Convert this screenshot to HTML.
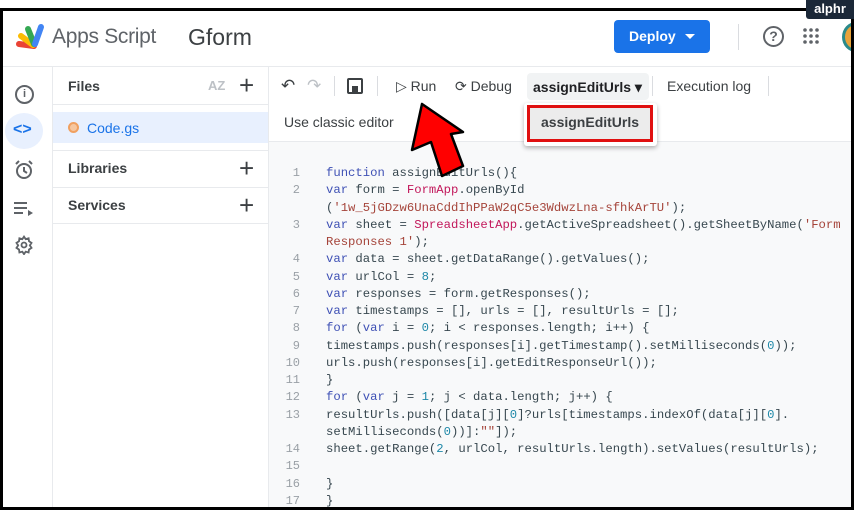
<!DOCTYPE html>
<html><head><meta charset="utf-8"><style>
*{margin:0;padding:0;box-sizing:border-box}
body{width:854px;height:510px;background:#fff;position:relative;overflow:hidden;font-family:"Liberation Sans",sans-serif;color:#3c4043}
.a{position:absolute}
.frame{left:0;top:8px;width:854px;height:502px;border:3px solid #000}
.t{font-size:14px;color:#3c4043;white-space:nowrap}
.code{font-family:"Liberation Mono",monospace;font-size:12.25px;color:#37474f;white-space:pre}
.ln{font-family:"Liberation Mono",monospace;font-size:12px;color:#9aa0a6;width:30px;text-align:right}
.k{color:#3f51b5}.c{color:#c2185b}.s{color:#a5443a}.n{color:#1e88a8}
.hl{height:1px;background:#e8eaed}
</style></head><body>
<svg class="a" style="left:14px;top:22px" width="34" height="28" viewBox="0 0 34 28">
<g stroke-linecap="round" stroke-width="6" fill="none">
<line x1="5" y1="22" x2="20" y2="24" stroke="#ea4335"/>
<line x1="7" y1="14" x2="19" y2="23" stroke="#fbbc04"/>
<line x1="14" y1="7" x2="20" y2="22" stroke="#34a853"/>
<line x1="27" y1="5" x2="21" y2="22" stroke="#4285f4"/>
</g></svg>
<div class="a" style="left:52px;top:25px;font-size:21px;color:#5f6368;letter-spacing:-0.3px">Apps Script</div>
<div class="a" style="left:188px;top:24px;font-size:23px;color:#3c4043">Gform</div>
<div class="a" style="left:614px;top:20px;width:96px;height:33px;background:#1a73e8;border-radius:4px;color:#fff;font-size:14px;font-weight:bold;line-height:33px;padding-left:15px">Deploy<span style="position:absolute;left:71px;top:14px;border-left:5px solid transparent;border-right:5px solid transparent;border-top:5px solid #fff"></span></div>
<div class="a" style="left:738px;top:24px;width:1px;height:26px;background:#dadce0"></div>
<div class="a" style="left:763px;top:26px;width:21px;height:21px;border:2px solid #5f6368;border-radius:50%;font-size:14px;font-weight:bold;text-align:center;line-height:17px;color:#5f6368">?</div>
<svg class="a" style="left:803px;top:28px" width="16" height="16"><g fill="#5f6368"><circle cx="2" cy="2" r="1.8"/><circle cx="8" cy="2" r="1.8"/><circle cx="14" cy="2" r="1.8"/><circle cx="2" cy="8" r="1.8"/><circle cx="8" cy="8" r="1.8"/><circle cx="14" cy="8" r="1.8"/><circle cx="2" cy="14" r="1.8"/><circle cx="8" cy="14" r="1.8"/><circle cx="14" cy="14" r="1.8"/></g></svg>
<div class="a" style="left:842px;top:22px;width:28px;height:30px;border-radius:50%;background:#e8a33a;border:3px solid #2a8a8a"></div>
<div class="a hl" style="left:0;top:66px;width:854px"></div>
<div class="a" style="left:15px;top:85px;width:19px;height:19px;border:2px solid #5f6368;border-radius:50%;font-size:11px;font-weight:bold;text-align:center;line-height:15px;color:#5f6368">i</div>
<div class="a" style="left:5px;top:113px;width:38px;height:36px;border-radius:50%;background:#e8f0fe"></div>
<div class="a" style="left:13px;top:121px;font-size:16px;font-weight:bold;color:#1a73e8">&lt;&gt;</div>
<svg class="a" style="left:14px;top:160px" width="20" height="20" viewBox="0 0 20 20" fill="none" stroke="#5f6368" stroke-width="2"><circle cx="10" cy="11" r="7"/><path d="M10 7v4l3 2M2 4l3-3M18 4l-3-3"/></svg>
<svg class="a" style="left:14px;top:200px" width="20" height="16" fill="#5f6368"><rect x="0" y="2" width="13" height="2"/><rect x="0" y="7" width="13" height="2"/><rect x="0" y="12" width="9" height="2"/><path d="M14 10l5 3-5 3z"/></svg>
<svg class="a" style="left:14px;top:235px" width="20" height="20" viewBox="0 0 24 24" fill="none" stroke="#5f6368" stroke-width="2.2"><circle cx="12" cy="12" r="3"/><path d="M12 2l2 3 3.5-1 .5 3.5 3 2-2 3 2 3-3 2-.5 3.5-3.5-1-2 3-2-3-3.5 1-.5-3.5-3-2 2-3-2-3 3-2 .5-3.5 3.5 1z"/></svg>
<div class="a" style="left:52px;top:66px;width:1px;height:444px;background:#e8eaed"></div>
<div class="a t" style="left:68px;top:78px;font-weight:bold">Files</div>
<div class="a" style="left:208px;top:78px;font-size:13px;color:#bdc1c6;font-weight:bold">AZ</div>
<div class="a" style="left:239px;top:70px;font-size:26px;color:#3c4043;font-weight:300">+</div>
<div class="a hl" style="left:53px;top:104px;width:215px"></div>
<div class="a" style="left:53px;top:112px;width:215px;height:31px;background:#e8f0fe"></div>
<div class="a" style="left:68px;top:122px;width:11px;height:11px;border:2px solid #f0a060;border-radius:50%;background:#f6c7a0"></div>
<div class="a t" style="left:87px;top:120px;color:#1a73e8">Code.gs</div>
<div class="a hl" style="left:53px;top:150px;width:215px"></div>
<div class="a t" style="left:68px;top:160px;font-weight:bold">Libraries</div>
<div class="a" style="left:239px;top:153px;font-size:26px;color:#3c4043">+</div>
<div class="a hl" style="left:53px;top:187px;width:215px"></div>
<div class="a t" style="left:68px;top:197px;font-weight:bold">Services</div>
<div class="a" style="left:239px;top:190px;font-size:26px;color:#3c4043">+</div>
<div class="a hl" style="left:53px;top:223px;width:215px"></div>
<div class="a" style="left:268px;top:66px;width:1px;height:444px;background:#e8eaed"></div>
<div class="a" style="left:281px;top:76px;font-size:17px;color:#3c4043">&#x21B6;</div>
<div class="a" style="left:307px;top:76px;font-size:17px;color:#bdc1c6">&#x21B7;</div>
<div class="a" style="left:334px;top:76px;width:1px;height:20px;background:#dadce0"></div>
<div class="a" style="left:347px;top:78px;width:16px;height:16px;border:2px solid #3c4043;border-radius:2px"><div style="position:absolute;left:3px;top:6px;width:6px;height:6px;background:#3c4043"></div></div>
<div class="a" style="left:377px;top:76px;width:1px;height:20px;background:#dadce0"></div>
<div class="a t" style="left:396px;top:78px">&#x25B7; Run</div>
<div class="a t" style="left:455px;top:78px">&#x27F3; Debug</div>
<div class="a" style="left:527px;top:73px;width:122px;height:27px;background:#f1f3f4;border-radius:4px"></div>
<div class="a t" style="left:533px;top:79px;font-weight:bold;color:#202124">assignEditUrls &#x25BE;</div>
<div class="a" style="left:652px;top:76px;width:1px;height:20px;background:#dadce0"></div>
<div class="a t" style="left:667px;top:78px">Execution log</div>
<div class="a" style="left:768px;top:76px;width:1px;height:20px;background:#dadce0"></div>
<div class="a t" style="left:284px;top:114px">Use classic editor</div>
<div class="a hl" style="left:269px;top:141px;width:585px"></div>
<div class="a" style="left:269px;top:142px;width:585px;height:368px;background:#f8f9fa"></div>
<div class="a" style="left:270px;top:165px;line-height:17.25px">
<div style="display:flex"><div class="ln">1<br>2<br><br>3<br><br>4<br>5<br>6<br>7<br>8<br>9<br>10<br>11<br>12<br>13<br><br>14<br>15<br>16<br>17</div>
<div class="code" style="margin-left:26px"><span class="k">function</span> assignEditUrls(){
<span class="k">var</span> form = <span class="c">FormApp</span>.openById
(<span class="s">'1w_5jGDzw6UnaCddIhPPaW2qC5e3WdwzLna-sfhkArTU'</span>);
<span class="k">var</span> sheet = <span class="c">SpreadsheetApp</span>.getActiveSpreadsheet().getSheetByName(<span class="s">'Form</span>
<span class="s">Responses 1'</span>);
<span class="k">var</span> data = sheet.getDataRange().getValues();
<span class="k">var</span> urlCol = <span class="n">8</span>;
<span class="k">var</span> responses = form.getResponses();
<span class="k">var</span> timestamps = [], urls = [], resultUrls = [];
<span class="k">for</span> (<span class="k">var</span> i = <span class="n">0</span>; i &lt; responses.length; i++) {
timestamps.push(responses[i].getTimestamp().setMilliseconds(<span class="n">0</span>));
urls.push(responses[i].getEditResponseUrl());
}
<span class="k">for</span> (<span class="k">var</span> j = <span class="n">1</span>; j &lt; data.length; j++) {
resultUrls.push([data[j][<span class="n">0</span>]?urls[timestamps.indexOf(data[j][<span class="n">0</span>].
setMilliseconds(<span class="n">0</span>))]:<span class="s">""</span>]);
sheet.getRange(<span class="n">2</span>, urlCol, resultUrls.length).setValues(resultUrls);

}
}</div></div></div>
<div class="a" style="left:524px;top:103px;width:133px;height:43px;background:#fff;box-shadow:0 2px 5px rgba(0,0,0,.3);border-radius:3px"></div>
<div class="a" style="left:527px;top:105px;width:126px;height:37px;border:3px solid #e01010;background:#ececec"></div>
<div class="a t" style="left:541px;top:114px;font-weight:bold;color:#3c4043">assignEditUrls</div>
<svg class="a" style="left:0;top:0" width="854" height="510"><polygon points="422,104 412,150 431,142 442,176 463,166 451,134 463,132" fill="#ff0000" stroke="#000" stroke-width="2.5" stroke-linejoin="round"/></svg>
<div class="a frame"></div>
<div class="a" style="left:806px;top:0;width:48px;height:19px;background:#1b2838;border-radius:0 0 0 3px;color:#fff;font-size:13px;font-weight:bold;text-align:center;line-height:18px">alphr</div>
</body></html>
